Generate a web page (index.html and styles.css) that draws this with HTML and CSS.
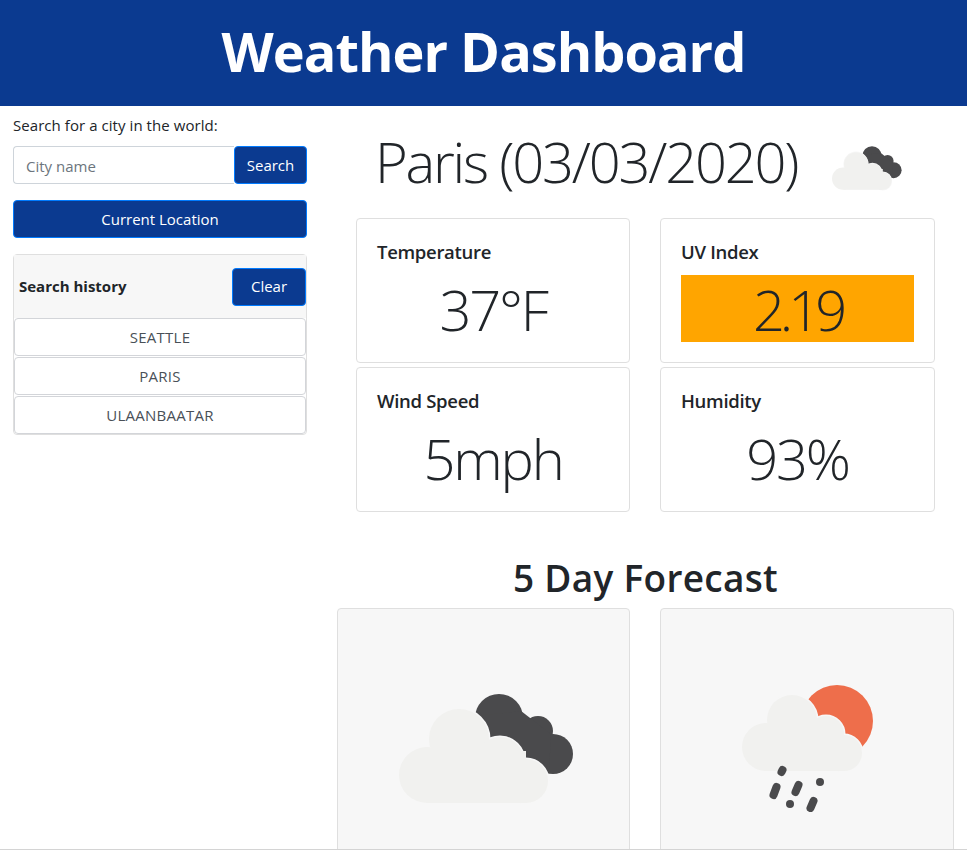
FILE: index.html
```html
<!DOCTYPE html>
<html lang="en">
<head>
  <meta charset="UTF-8" />
  <meta name="viewport" content="width=device-width, initial-scale=1.0" />
  <title>Weather Dashboard</title>
  <link rel="stylesheet" href="styles.css">
</head>
<body>
  <svg class="defs" aria-hidden="true">
    <symbol id="cloudy" viewBox="358 680 250 135">
      <g class="dark">
        <circle cx="498" cy="717" r="24" />
        <circle cx="537" cy="730" r="15" />
        <circle cx="552" cy="753" r="20" />
        <path d="M474 715 L520 710 L550 733 L548 772 L500 770 Z" />
      </g>
      <g class="cloud-edge">
        <circle cx="458" cy="738" r="30" />
        <circle cx="499" cy="760" r="24" />
        <circle cx="525" cy="780" r="22" />
      </g>
      <g class="cloud">
        <circle cx="426" cy="774" r="28" />
        <circle cx="458" cy="738" r="30" />
        <circle cx="499" cy="760" r="24" />
        <circle cx="525" cy="780" r="22" />
        <rect x="426" y="750" width="99" height="52" />
      </g>
    </symbol>
    <symbol id="rainy" viewBox="682 680 250 135">
      <circle class="sun" cx="837" cy="720" r="36" />
      <g class="cloud-edge">
        <circle cx="792" cy="719" r="25" />
        <circle cx="826" cy="733" r="18" />
        <circle cx="844" cy="752" r="18" />
      </g>
      <g class="cloud">
        <circle cx="766" cy="746" r="24" />
        <circle cx="792" cy="719" r="25" />
        <circle cx="826" cy="733" r="18" />
        <circle cx="844" cy="752" r="18" />
        <rect x="766" y="730" width="78" height="40" />
      </g>
      <g class="rain">
        <line x1="782.5" y1="769" x2="781.5" y2="771" />
        <line x1="820" y1="781" x2="820" y2="781" />
        <line x1="790" y1="803" x2="790" y2="803" />
        <line x1="776.5" y1="786" x2="773.5" y2="794" />
        <line x1="798.5" y1="784" x2="795.5" y2="791" />
        <line x1="813.5" y1="800" x2="810.5" y2="807" />
      </g>
    </symbol>
  </svg>

  <header class="top-bar">
    <h1>Weather Dashboard</h1>
  </header>

  <div class="page">
    <aside class="sidebar">
      <label class="search-label" for="city">Search for a city in the world:</label>
      <div class="search-row">
        <input type="text" id="city" placeholder="City name">
        <button class="btn btn-search">Search</button>
      </div>
      <button class="btn btn-wide">Current Location</button>

      <div class="history">
        <div class="history-head">
          <strong>Search history</strong>
          <button class="btn btn-clear">Clear</button>
        </div>
        <button class="history-item">SEATTLE</button>
        <button class="history-item">PARIS</button>
        <button class="history-item">ULAANBAATAR</button>
      </div>
    </aside>

    <main class="content">
      <div class="city-title">
        <span class="display">Paris (03/03/2020)</span>
        <svg class="icon-small"><use href="#cloudy" /></svg>
      </div>

      <div class="stats">
        <div class="stat">
          <h5>Temperature</h5>
          <p class="display">37°F</p>
        </div>
        <div class="stat">
          <h5>UV Index</h5>
          <p class="display uv">2.19</p>
        </div>
        <div class="stat">
          <h5>Wind Speed</h5>
          <p class="display">5mph</p>
        </div>
        <div class="stat">
          <h5>Humidity</h5>
          <p class="display">93%</p>
        </div>
      </div>

      <h2 class="forecast-title">5 Day Forecast</h2>
      <div class="forecast">
        <div class="day">
          <svg class="icon-big"><use href="#cloudy" /></svg>
        </div>
        <div class="day">
          <svg class="icon-big"><use href="#rainy" /></svg>
        </div>
      </div>
    </main>
  </div>

  <div class="window-edge"></div>
</body>
</html>
```

FILE: styles.css
```css
html, body {
  height: 100%;
  overflow: hidden;
}
body {
  margin: 0;
  font-family: "Open Sans", "Noto Sans", sans-serif;
  font-size: 15px;
  line-height: 1.5;
  color: #212529;
  background: #fff;
}
.defs {
  display: none;
}
.top-bar {
  height: 106px;
  box-sizing: border-box;
  padding-bottom: 4px;
  background: #0b3a90;
  color: #fff;
  display: flex;
  align-items: center;
  justify-content: center;
}
.top-bar h1 {
  margin: 0;
  font-size: 54px;
  font-weight: 700;
  line-height: 1.2;
  letter-spacing: -0.95px;
}
.page {
  display: grid;
  grid-template-columns: 307px 1fr;
}
.sidebar {
  padding: 7px 0 0 13px;
}
.search-label {
  display: block;
  line-height: 24px;
  margin-bottom: 9px;
  letter-spacing: 0.06px;
}
.search-row {
  display: flex;
  margin-bottom: 16px;
}
.search-row input {
  flex: 1;
  min-width: 0;
  height: 38px;
  box-sizing: border-box;
  padding: 8px 12px 6px;
  font: inherit;
  color: #495057;
  border: 1px solid #ced4da;
  border-right: none;
  border-radius: 4px 0 0 4px;
}
.search-row input::placeholder {
  color: #6c757d;
}
.btn {
  height: 38px;
  box-sizing: border-box;
  padding: 6px 12px;
  font: inherit;
  color: #fff;
  background: #0b3a90;
  border: 1px solid #007bff;
  border-radius: 4px;
}
.btn-search {
  width: 73px;
  padding: 6px 0;
}
.btn-clear {
  width: 74px;
}
.btn-wide {
  display: block;
  width: 100%;
}
.history {
  margin-top: 16px;
  border: 1px solid #dfdfdf;
  border-radius: 4px;
  display: flex;
  flex-direction: column;
}
.history-head {
  height: 63px;
  background: #f7f7f7;
  display: flex;
  align-items: center;
  justify-content: space-between;
  padding-left: 5px;
}
.history-item {
  height: 38px;
  margin-bottom: 1px;
  font: inherit;
  letter-spacing: 0.25px;
  color: #495057;
  background: #fff;
  border: 1px solid #d3d5d9;
  border-radius: 4px;
}
.history-item:last-child {
  margin-bottom: 0;
}
.content {
  padding-left: 30px;
}
.display {
  font-size: 56px;
  font-weight: 300;
  line-height: 1.2;
  letter-spacing: -2.2px;
}
.city-title {
  height: 112px;
  padding-left: 38px;
  display: flex;
  align-items: center;
}
.city-title .display {
  width: 441px;
  white-space: nowrap;
  margin-top: -1px;
}
.icon-small {
  width: 100px;
  height: 54px;
  margin-top: 11px;
}
.stats {
  display: grid;
  grid-template-columns: 274px 275px;
  column-gap: 30px;
  row-gap: 4px;
  margin-left: 19px;
}
.stat {
  height: 145px;
  box-sizing: border-box;
  padding: 22px 20px 20px;
  border: 1px solid #dfdfdf;
  border-radius: 4px;
}
.stat h5 {
  margin: 0 0 12px;
  font-size: 18.5px;
  font-weight: 600;
  line-height: 1.2;
  letter-spacing: -0.3px;
}
.stat p {
  margin: 0;
  padding-top: 2px;
  line-height: 65px;
  text-align: center;
}
.stat .uv {
  background: orange;
  letter-spacing: -5px;
}
.forecast-title {
  margin: 44px 0 8px;
  width: 617px;
  text-align: center;
  font-size: 37px;
  font-weight: 600;
  line-height: 1.2;
  letter-spacing: 0.3px;
}
.forecast {
  display: grid;
  grid-template-columns: 293px 294px;
  column-gap: 30px;
}
.day {
  height: 320px;
  box-sizing: border-box;
  border: 1px solid #dfdfdf;
  border-radius: 4px;
  background: #f7f7f7;
  text-align: center;
  padding-top: 72px;
}
.icon-big {
  width: 250px;
  height: 135px;
  filter: blur(0.6px);
}
.dark {
  fill: #4a4a4c;
}
.cloud {
  fill: #f1f1ef;
}
.cloud-edge {
  fill: #f7f7f7;
  stroke: #f7f7f7;
  stroke-width: 3;
}
.sun {
  fill: #ee6e4b;
}
.rain {
  stroke: #4a4a4c;
  stroke-width: 8;
  stroke-linecap: round;
}
.window-edge {
  position: fixed;
  left: 0;
  right: 0;
  bottom: 0;
  height: 1px;
  background: #d4d4d4;
}
```
